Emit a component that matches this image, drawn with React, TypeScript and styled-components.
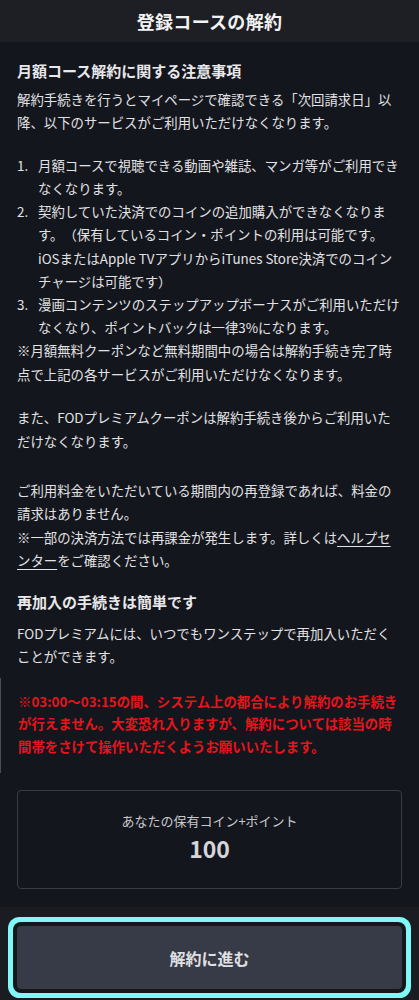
import styled, { createGlobalStyle } from "styled-components";

const GlobalStyle = createGlobalStyle`
  html, body {
    margin: 0;
    padding: 0;
    background: #14161d;
  }
  body {
    font-family: "Noto Sans CJK JP", "Noto Sans", sans-serif;
    color: #e4e4e6;
    -webkit-font-smoothing: antialiased;
    text-spacing-trim: space-all;
  }
  * { box-sizing: border-box; }
`;

const Page = styled.div`
  width: 419px;
  min-height: 1000px;
  display: flex;
  flex-direction: column;
  background: #14161d;
`;

const Header = styled.header`
  height: 42px;
  background: #1e1f24;
  display: flex;
  align-items: center;
  justify-content: center;
`;

const Title = styled.h1`
  margin: 0;
  font-size: 18px;
  font-weight: 700;
  color: #f2f2f2;
  letter-spacing: 0.3px;
`;

const Content = styled.main`
  padding: 18px 17px 18px;
  display: flex;
  flex-direction: column;
`;

const Heading = styled.h2<{ $gap?: number; $top?: number }>`
  margin: ${(p) => p.$top ?? 0}px 0 ${(p) => p.$gap ?? 6}px;
  font-size: 15px;
  line-height: 22px;
  font-weight: 700;
  color: #e8e8ea;
`;

const Text = styled.p<{ $top?: number }>`
  margin: ${(p) => p.$top ?? 0}px 0 0;
  font-size: 13.4px;
  line-height: 23.4px;
  color: #e2e2e4;
`;

const List = styled.ol`
  margin: 19px 0 0;
  padding: 0;
  list-style: none;
  font-size: 13.4px;
  line-height: 23.2px;
  color: #e2e2e4;
`;

const Item = styled.li`
  display: flex;
`;

const Num = styled.span`
  flex: 0 0 21px;
`;

const HelpLink = styled.a`
  color: #e2e2e4;
  text-decoration: underline;
  text-underline-offset: 3px;
`;

const Alert = styled.div`
  margin: 9px -17px 0;
  padding: 12px 17px 16px;
  border-left: 1px solid #4a4c52;
`;

const AlertText = styled.p`
  margin: 0;
  font-size: 13.4px;
  line-height: 22.6px;
  font-weight: 700;
  color: #e8141b;
`;

const CoinCard = styled.section`
  margin-top: 17px;
  height: 99px;
  border: 1px solid #3a3c43;
  border-radius: 4px;
  display: flex;
  flex-direction: column;
  align-items: center;
  justify-content: center;
  padding-bottom: 4px;
`;

const CoinLabel = styled.div`
  font-size: 13px;
  line-height: 20px;
  color: #c9c9cc;
`;

const CoinValue = styled.div`
  font-size: 23px;
  line-height: 34px;
  font-weight: 700;
  color: #d6d6d9;
`;

const Footer = styled.footer`
  margin-top: auto;
  background: #1b1c21;
  padding: 19px 17px 14px;
`;

const ProceedButton = styled.button`
  width: 100%;
  height: 63px;
  border: none;
  border-radius: 4px;
  background: #373a47;
  color: #e0e0e3;
  font-family: inherit;
  font-size: 16px;
  font-weight: 700;
  box-shadow: 0 0 0 4px #16171b, 0 0 0 9px #80f8f8;
  cursor: pointer;
`;

const items = [
  "月額コースで視聴できる動画や雑誌、マンガ等がご利用できなくなります。",
  "契約していた決済でのコインの追加購入ができなくなります。（保有しているコイン・ポイントの利用は可能です。iOSまたはApple TVアプリからiTunes Store決済でのコインチャージは可能です）",
  "漫画コンテンツのステップアップボーナスがご利用いただけなくなり、ポイントバックは一律3%になります。",
];

export default function App() {
  return (
    <Page>
      <GlobalStyle />
      <Header>
        <Title>登録コースの解約</Title>
      </Header>
      <Content>
        <Heading>月額コース解約に関する注意事項</Heading>
        <Text>
          解約手続きを行うとマイページで確認できる「次回請求日」以降、以下のサービスがご利用いただけなくなります。
        </Text>
        <List>
          {items.map((t, i) => (
            <Item key={i}>
              <Num>{i + 1}.</Num>
              <span>{t}</span>
            </Item>
          ))}
        </List>
        <Text>
          ※月額無料クーポンなど無料期間中の場合は解約手続き完了時点で上記の各サービスがご利用いただけなくなります。
        </Text>
        <Text $top={20}>
          また、FODプレミアムクーポンは解約手続き後からご利用いただけなくなります。
        </Text>
        <Text $top={26}>
          ご利用料金をいただいている期間内の再登録であれば、料金の請求はありません。
          <br />
          ※一部の決済方法では再課金が発生します。詳しくは
          <HelpLink href="#">ヘルプセンター</HelpLink>
          をご確認ください。
        </Text>
        <Heading $top={18} $gap={9}>
          再加入の手続きは簡単です
        </Heading>
        <Text>
          FODプレミアムには、いつでもワンステップで再加入いただくことができます。
        </Text>
        <Alert>
          <AlertText>
            ※03:00〜03:15の間、システム上の都合により解約のお手続きが行えません。大変恐れ入りますが、解約については該当の時間帯をさけて操作いただくようお願いいたします。
          </AlertText>
        </Alert>
        <CoinCard>
          <CoinLabel>あなたの保有コイン+ポイント</CoinLabel>
          <CoinValue>100</CoinValue>
        </CoinCard>
      </Content>
      <Footer>
        <ProceedButton>解約に進む</ProceedButton>
      </Footer>
    </Page>
  );
}
